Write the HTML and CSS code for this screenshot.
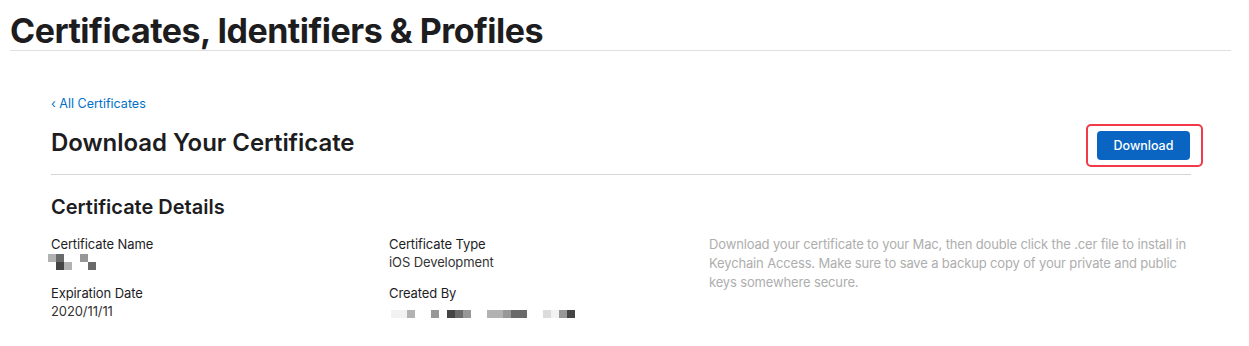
FILE: index.html
```html
<!DOCTYPE html>
<html lang="en">
<head>
<meta charset="utf-8">
<title>Certificates, Identifiers &amp; Profiles</title>
<link rel="stylesheet" href="styles.css">
</head>
<body>
<header class="page-header">
  <h1 class="page-title">Certificates, Identifiers &amp; Profiles</h1>
</header>
<main class="content">
  <a class="back-link" href="#">&lsaquo; All Certificates</a>
  <div class="title-row">
    <h2 class="section-title">Download Your Certificate</h2>
    <div class="highlight">
      <button class="btn-download" type="button">Download</button>
    </div>
  </div>
  <h3 class="details-title">Certificate Details</h3>
  <div class="details">
    <div class="col">
      <div class="field">
        <div class="label">Certificate Name</div>
        <div class="redact redact-name">
          <div class="px-col"><span class="px s3"></span><span class="px s0"></span></div>
          <div class="px-col"><span class="px s5"></span><span class="px s6"></span></div>
          <div class="px-col"><span class="px s0"></span><span class="px s3"></span></div>
          <div class="px-col"><span class="px s0"></span><span class="px s0"></span></div>
          <div class="px-col"><span class="px s4"></span><span class="px s0"></span></div>
          <div class="px-col"><span class="px s0"></span><span class="px s5"></span></div>
        </div>
      </div>
      <div class="field">
        <div class="label">Expiration Date</div>
        <div class="value">2020/11/11</div>
      </div>
    </div>
    <div class="col">
      <div class="field">
        <div class="label">Certificate Type</div>
        <div class="value">iOS Development</div>
      </div>
      <div class="field">
        <div class="label">Created By</div>
        <div class="redact redact-line">
          <span class="px s1"></span><span class="px s1"></span><span class="px s3"></span><span class="px s0"></span>
          <span class="px s0"></span><span class="px s4"></span><span class="px s0"></span><span class="px s6"></span>
          <span class="px s5"></span><span class="px s4"></span><span class="px s0"></span><span class="px s0"></span>
          <span class="px s3"></span><span class="px s3"></span><span class="px s4"></span><span class="px s5"></span>
          <span class="px s5"></span><span class="px s0"></span><span class="px s0"></span><span class="px s2"></span>
          <span class="px s1"></span><span class="px s4"></span><span class="px s6"></span>
        </div>
      </div>
    </div>
    <p class="note">Download your certificate to your Mac, then double click the .cer file to install in Keychain Access. Make sure to save a backup copy of your private and public keys somewhere secure.</p>
  </div>
</main>
</body>
</html>
```
FILE: styles.css
```css
* { box-sizing: border-box; }
body {
  margin: 0;
  background: #fff;
  font-family: Inter, "Noto Sans", "Liberation Sans", sans-serif;
  color: #1d1d1f;
}
.page-header {
  margin: 0 18px 0 10px;
  border-bottom: 1px solid #e0e0e0;
  padding-top: 11px;
  height: 51px;
}
.page-title {
  margin: 0;
  font-size: 34px;
  font-weight: 700;
  letter-spacing: -0.5px;
  line-height: 40px;
}
.content {
  margin: 0 58px 0 51px;
  padding-top: 44px;
}
.back-link {
  display: block;
  font-size: 12.5px;
  line-height: 18px;
  color: #0070c9;
  text-decoration: none;
}
.title-row {
  display: flex;
  align-items: center;
  justify-content: space-between;
  border-bottom: 1px solid #d6d6d6;
  height: 62px;
  padding-bottom: 2px;
}
.section-title {
  margin: 0;
  font-size: 24px;
  font-weight: 600;
  letter-spacing: -0.05px;
  line-height: 30px;
}
.highlight {
  border: 2px solid #f23a48;
  border-radius: 5px;
  padding: 5px 11px 5px 9px;
  margin-right: -12px;
  margin-top: 6px;
}
.btn-download {
  display: block;
  width: 93px;
  height: 29px;
  border: none;
  border-radius: 4px;
  background: #0a64c2;
  color: #fff;
  font-family: inherit;
  font-size: 12.5px;
  font-weight: 500;
  padding: 0;
}
.details-title {
  margin: 19px 0 0;
  font-size: 20px;
  font-weight: 600;
  line-height: 26px;
}
.details {
  display: grid;
  grid-template-columns: 338px 320px 1fr;
  margin-top: 15px;
}
.col {
  display: flex;
  flex-direction: column;
  gap: 13px;
}
.field { display: flex; flex-direction: column; }
.label, .value {
  font-size: 13px;
  line-height: 18px;
  color: #333;
  letter-spacing: -0.1px;
}
.label { color: #1d1d1f; }
.redact { display: flex; height: 18px; }
.redact-name { margin-left: -3px; padding-top: 1px; }
.redact-name .px-col { display: flex; flex-direction: column; }
.redact-name .px { width: 8px; height: 8px; }
.redact-line { margin-left: 2px; align-items: flex-end; padding-bottom: 2px; }
.redact-line .px { width: 8px; height: 8px; }
.px { display: block; }
.s0 { background: transparent; }
.s1 { background: #f2f2f2; }
.s2 { background: #dcdcdc; }
.s3 { background: #b2b2b2; }
.s4 { background: #979797; }
.s5 { background: #6a6a6a; }
.s6 { background: #444; }
.note {
  margin: 0;
  max-width: 482px;
  font-size: 13px;
  line-height: 19px;
  letter-spacing: -0.15px;
  color: #aeaeae;
}
```
